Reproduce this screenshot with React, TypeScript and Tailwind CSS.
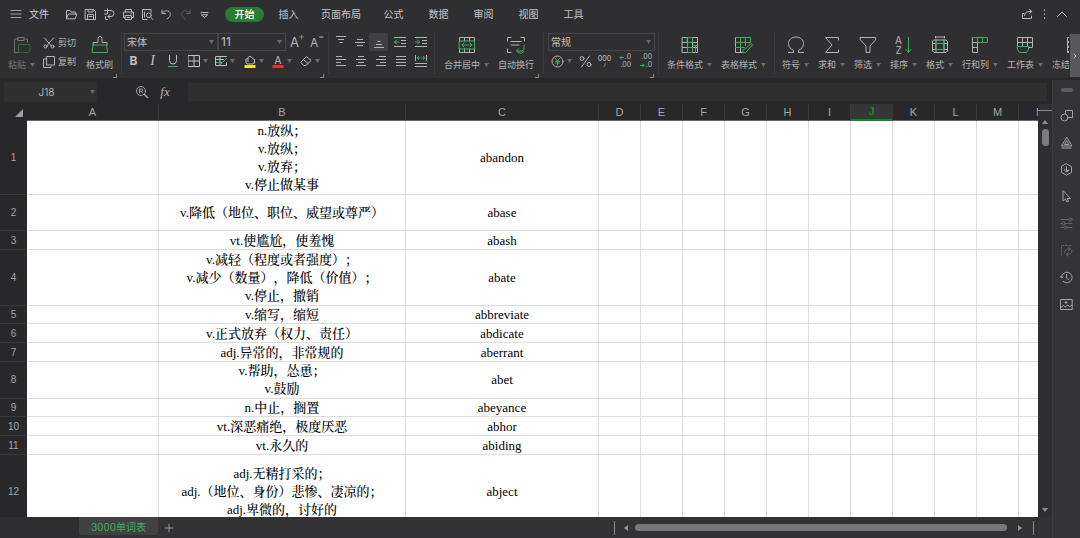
import React from "react";

type Kids = { children?: React.ReactNode };

const GREEN = "#3fae5c";

function Svg({ w = 16, h = 16, children }: Kids & { w?: number; h?: number }) {
  return (
    <svg
      width={w}
      height={h}
      viewBox={`0 0 ${w} ${h}`}
      fill="none"
      stroke="currentColor"
      strokeWidth="1"
      strokeLinecap="round"
      strokeLinejoin="round"
      className="shrink-0"
      aria-hidden="true"
    >
      {children}
    </svg>
  );
}

function Caret() {
  return (
    <svg width="5" height="4" viewBox="0 0 5 4" fill="currentColor" className="shrink-0 text-[#6c6c6f]" aria-hidden="true">
      <path d="M0 0h5L2.5 4z" />
    </svg>
  );
}

function Divider() {
  return <span className="my-1 w-px shrink-0 self-stretch bg-[#3b3b3e]" />;
}

function Corner() {
  return (
    <span className="absolute right-1 bottom-0 h-1 w-1 border-r border-b border-[#88888a]" />
  );
}

function Tool({ icon, label, caret = true, dim = false }: { icon: React.ReactNode; label: string; caret?: boolean; dim?: boolean }) {
  return (
    <button
      type="button"
      className={`flex shrink-0 flex-col items-center gap-1 text-[9px] leading-3 whitespace-nowrap ${dim ? "text-[#737376]" : "text-[#b4b4b6]"}`}
    >
      <span className="flex h-5 items-center">{icon}</span>
      <span className="flex items-center gap-1">
        {label}
        {caret && <Caret />}
      </span>
    </button>
  );
}

function Small({ label, w, caret = false, active = false, children }: Kids & { label: string; w: string; caret?: boolean; active?: boolean }) {
  return (
    <button
      type="button"
      aria-label={label}
      className={`flex h-[18px] shrink-0 items-center justify-center gap-[3px] ${w} ${active ? "rounded-xs bg-[#404042]" : ""}`}
    >
      {children}
      {caret && <Caret />}
    </button>
  );
}

function Lines({ d, extra }: { d: string; extra?: string }) {
  return (
    <Svg w={12} h={12}>
      <path d={d} strokeLinecap="butt" />
      {extra && <path d={extra} stroke={GREEN} />}
    </Svg>
  );
}

const quick: [string, React.ReactNode][] = [
  ["打开", <path d="M1.5 10.5v-8h3.5l1 1.5h4.5v2M1.5 10.5l2-4.5h8.5l-1.8 4.5z" />],
  ["保存", <><path d="M1.5 1.5h8l2 2v8h-10z" /><path d="M4 1.5v2.5h5V1.5M3.5 11.5v-5h6v5M5 8.5h3" /></>],
  ["输出", <><path d="M1.5 2.5h6.500a3 3 0 0 1 0 6H5M7 6.500l-2.200 2 2.200 2M4.500 1v5H1.500M2.500 8.500v3h2" /></>],
  ["打印", <><path d="M3.5 4V1.5h6V4M3 9.5H1.5V4h10v5.5H10M3.5 7.5h6v4h-6zM9 5.8h.5M5 9.5h3" /></>],
  ["打印预览", <><path d="M6 11.5H1.5v-10h8.5v3" /><circle cx="7.8" cy="7.3" r="2.4" /><path d="M9.6 9.2l2.2 2.3M3.5 4v5" /></>],
  ["撤销", <path d="M2 2v3.5h3.5M2.2 5.2C4 2.8 7 2 9 3.6c2.4 2 1.5 5.4-2 7.4" />],
];

const menus: [string, string][] = [
  ["插入", "w-[41px]"],
  ["页面布局", "w-14"],
  ["公式", "w-[41px]"],
  ["数据", "w-[41px]"],
  ["审阅", "w-[41px]"],
  ["视图", "w-[41px]"],
  ["工具", "w-[41px]"],
];

function TopBar() {
  return (
    <header className="flex h-7 shrink-0 items-center pr-3 pl-2.5 text-[10px] text-[#d2d2d4]">
      <button type="button" aria-label="菜单" className="text-[#a0a0a3]">
        <Svg w={12} h={12}><path d="M1 2.5h10M1 6h10M1 9.5h10" /></Svg>
      </button>
      <button type="button" className="ml-[7px] w-8 text-left">文件</button>
      <div className="ml-1 flex gap-[6px] text-[#b8b8ba]">
        {quick.map(([name, d]) => (
          <button key={name} type="button" aria-label={name}>
            <Svg w={13} h={13}>{d}</Svg>
          </button>
        ))}
        <button type="button" aria-label="恢复" className="text-[#5f5f62]">
          <Svg w={13} h={13}><path d="M11 2v3.5H7.500M10.800 5.200C9 2.800 6 2 4 3.600c-2.400 2-1.500 5.400 2 7.400" /></Svg>
        </button>
        <button type="button" aria-label="自定义">
          <Svg w={13} h={13}><path d="M3 4.500h7M3.500 7L6.500 9.500 9.500 7z" /></Svg>
        </button>
      </div>
      <nav className="ml-3.5 flex items-center gap-1">
        <button type="button" className="h-[15px] w-[39px] rounded-full bg-[#267c33] leading-[15px] font-medium text-white">开始</button>
        {menus.map(([m, w]) => (
          <button key={m} type="button" className={`${w} text-center text-[#c4c4c6]`}>{m}</button>
        ))}
      </nav>
      <div className="ml-auto flex items-center gap-1.5 text-[#b8b8ba]">
        <button type="button" aria-label="分享">
          <Svg w={12} h={12}><path d="M3 5.500H1.500v5h9V8M3.500 7.500C4 5 5.500 3.500 8 3.500h2.500M8.500 1.200l2.300 2.300L8.500 5.500" /></Svg>
        </button>
        <button type="button" aria-label="更多">
          <Svg w={11} h={12}><path d="M5.500 2v.3M5.500 6v.3M5.500 10v.3" strokeWidth="1.300" /></Svg>
        </button>
        <button type="button" aria-label="收起">
          <Svg w={12} h={12}><path d="M1.500 8.500L6 4l4.500 4.500" /></Svg>
        </button>
      </div>
    </header>
  );
}

function Select({ label, value, w, size = "text-[10px]" }: { label: string; value: string; w: string; size?: string }) {
  return (
    <label className={`relative flex h-[18px] items-center border border-[#454548] ${w}`}>
      <select aria-label={label} defaultValue={value} className={`w-full appearance-none bg-transparent pl-[2px] leading-4 text-[#c0c0c2] outline-none ${size}`}>
        <option>{value}</option>
      </select>
      <span className="pointer-events-none absolute right-[3px]"><Caret /></span>
    </label>
  );
}

const ribbonEnd: [string, React.ReactNode][] = [
  ["符号", <Svg w={18} h={18}><path d="M1.500 16.500h5v-2.300C3.500 13 1.500 11 1.500 7.700 1.500 4 4.500 1 9 1s7.500 3 7.500 6.700c0 3.300-2 5.300-5 6.500v2.300h5" /></Svg>],
  ["求和", <Svg w={18} h={18}><path d="M15.500 4V1.500h-13L9 9l-6.500 7.500h13V14" /></Svg>],
  ["筛选", <Svg w={18} h={18}><path d="M1.500 1.500h15V4L11 10v6.500H7V10L1.500 4z" /></Svg>],
  ["排序", <span className="flex items-center gap-[3px]">
    <span className="flex flex-col items-center text-[10px] leading-[10px]"><span>A</span><span>Z</span></span>
    <Svg w={7} h={18}><path d="M3.500 1.500v15M1 13.500l2.500 3 2.500-3" stroke={GREEN} /></Svg>
  </span>],
  ["格式", <Svg w={18} h={18}>
    <path d="M4.500 0v2M13.500 0v2M4.500 1h9M3 4h12l1.500 1.500v9.500L15 16.500H3L1.500 15V5.500zM1.500 7.500h15M1.500 13.500h15M5 4v12.500M13 4v12.500" />
    <path d="M5 7.500h8v6H5z" stroke={GREEN} />
  </Svg>],
  ["行和列", <Svg w={18} h={18}>
    <path d="M1.500 6.500v10h5v-10M1.500 11.500h5M1.500 1.500v5h5" />
    <path d="M1.500 1.500h15v5h-10v-5M11.500 1.500v5" stroke={GREEN} />
  </Svg>],
  ["工作表", <Svg w={18} h={18}>
    <path d="M1.500 10V1.500h15v10h-4M1.500 6.500h15M6.500 1.500V10M11.500 1.500v8.500" />
    <path d="M1.500 10.500h11v3l-2 3h-7l-2-3z" stroke={GREEN} />
  </Svg>],
];

function Ribbon() {
  return (
    <section aria-label="开始" className="flex h-[52px] shrink-0 border-b-2 border-[#262628] text-[#b4b4b6]">
      <div className="flex min-w-0 flex-1 overflow-hidden">
        <div className="relative flex w-[121px] shrink-0 items-start pt-[7px] pl-2">
          <Tool dim label="粘贴" icon={
            <Svg w={18} h={18}>
              <path d="M5 3H1.500v13.500h4M11 3h3.500v3.500M5 1.500h6v3H5z" />
              <path d="M6 8.500h11v6l-2 2H6z" stroke="#2b6b3d" />
            </Svg>} />
          <div className="ml-2 flex flex-col gap-[3px] text-[9px] leading-4">
            <button type="button" className="flex items-center gap-[3px]">
              <Svg w={12} h={12}><path d="M1.500 1l7 8M10.500 1l-7 8" /><circle cx="2.500" cy="9.500" r="1.500" /><circle cx="9.500" cy="9.500" r="1.500" /></Svg>
              剪切
            </button>
            <button type="button" className="flex items-center gap-[3px]">
              <Svg w={12} h={12}><path d="M4 .5h7.500v8.500H4zM2.500 3H.5v8.500H8V10.500" /></Svg>
              复制
            </button>
          </div>
          <div className="ml-[10px]">
            <Tool caret={false} label="格式刷" icon={
              <Svg w={18} h={18}>
                <path d="M2 9V6.500h5V2.500a2 2 0 0 1 4 0v4h5V9" />
                <path d="M2.500 9h13l1 7.500h-15z" stroke={GREEN} />
              </Svg>} />
          </div>
          <Corner />
        </div>
        <Divider />
        <div className="relative flex w-[206px] shrink-0 flex-col gap-px pt-[5px] pl-0.5">
          <div className="flex items-center">
            <Select label="字体" value="宋体" w="w-[94px]" />
            <Select label="字号" value="11" w="w-[68px]" size="text-xs" />
            <Small label="增大字号" w="w-[22px]">
              <Svg w={14} h={14}><text x="0" y="12" fontSize="13" fill="currentColor" stroke="none" fontFamily="Inter">A</text><path d="M11.500 0v4M9.500 2h4" stroke={GREEN} /></Svg>
            </Small>
            <Small label="减小字号" w="w-[18px]">
              <Svg w={14} h={14}><text x="0" y="12" fontSize="12" fill="currentColor" stroke="none" fontFamily="Inter">A</text><path d="M9.500 2h3.500" /></Svg>
            </Small>
          </div>
          <div className="flex items-center text-xs text-[#c0c0c2]">
            <Small label="加粗" w="w-[19px]"><span className="font-bold">B</span></Small>
            <Small label="倾斜" w="w-[19px]"><span className="font-['Liberation_Serif',serif] text-sm italic">I</span></Small>
            <Small label="下划线" w="w-[22px]"><Svg w={12} h={14}><path d="M2.500 1.500v5a3.500 3.500 0 0 0 7 0v-5" /><path d="M1.500 12.500h9" stroke={GREEN} /></Svg></Small>
            <Small label="边框" w="w-[27px]" caret><Svg w={12} h={12}><path d="M.5.5h11v11H.5zM6 .5v11M.5 6h11" /></Svg></Small>
            <Small label="绘制表格" w="w-[27px]" caret><Svg w={12} h={12}><path d="M11.500 1.500H.5v9h11V8M.5 4.500h8M5 1.500v9M.5 7.500h4" /><path d="M6 9l5.500-5.500M2 7.500h5" stroke={GREEN} /></Svg></Small>
            <Small label="填充颜色" w="w-[32px]" caret><Svg w={12} h={13}><path d="M2 4.500L6 1l4 3.500M2 4.500v3l1 1.500h6l1.500-2M10.500 4.500V8M4 3.500v3" /><path d="M.5 11.500h11" stroke="#f3ea1c" strokeWidth="3" strokeLinecap="butt" /></Svg></Small>
            <Small label="字体颜色" w="w-[24px]" caret><Svg w={12} h={13}><text x="2.500" y="9" fontSize="10" fill="currentColor" stroke="none" fontFamily="Inter">A</text><path d="M1.500 11.500h9" stroke="#e8302c" strokeWidth="3" /></Svg></Small>
            <Small label="清除" w="w-[32px]" caret><Svg w={12} h={12}><path d="M1 7l5.500-5.500L11 5.500 6 10.500H4zM3.500 4.500L8 8.500" /></Svg></Small>
          </div>
          <Corner />
        </div>
        <Divider />
        <div className="flex w-[105px] shrink-0 flex-col gap-px pt-[5px] pl-0.5">
          <div className="flex items-center">
            <Small label="顶端对齐" w="w-[19px]"><Lines d="M1 .5h10M3 3.500h6M4.500 6.500h3" /></Small>
            <Small label="垂直居中" w="w-[19px]"><Lines d="M3 3.500h6M1 6.500h10M3 9.500h6" /></Small>
            <Small label="底端对齐" w="w-[19px]" active><Lines d="M4.500 5.500h3M3 8.500h6M1 11.500h10" /></Small>
            <Small label="减少缩进" w="w-[24px]"><Lines d="M0 1.500h12M7 4.500h5M7 7.500h5M0 10.500h12" extra="M5 6H.5M2.500 4l-2 2 2 2" /></Small>
            <Small label="增加缩进" w="w-[18px]"><Lines d="M0 1.500h12M7 4.500h5M7 7.500h5M0 10.500h12" extra="M0 6h4.500M2.500 4l2 2-2 2" /></Small>
          </div>
          <div className="flex items-center">
            <Small label="左对齐" w="w-[20px]"><Lines d="M1 1.500h6M1 4.500h10M1 7.500h5M1 10.500h10" /></Small>
            <Small label="居中" w="w-[20px]"><Lines d="M3 1.500h6M1 4.500h10M3 7.500h6M1 10.500h10" /></Small>
            <Small label="右对齐" w="w-[20px]"><Lines d="M4 1.500h7M1 4.500h10M5 7.500h6M1 10.500h10" /></Small>
            <Small label="两端对齐" w="w-[20px]"><Lines d="M1 1.500h10M1 4.500h10M1 7.500h10M1 10.500h10" /></Small>
            <Small label="分散对齐" w="w-[20px]"><Lines d="M0 8.500h12M0 11.500h12M.5 0v6M11.500 0v6" extra="M5 3H2.500l1-1.500M2.500 3l1 1.500M7 3h2.500L8.500 1.500M9.500 3l-1 1.500" /></Small>
          </div>
        </div>
        <Divider />
        <div className="relative flex w-[108px] shrink-0 gap-[9px] pt-[7px] pl-[9px]">
          <Tool label="合并居中" icon={
            <Svg w={18} h={18}>
              <path d="M1.500 5V1.500h15V5M1.500 13v3.500h15V13M6.500 1.500V5M11.500 1.500V5M6.500 13v3.500M11.500 13v3.500" />
              <path d="M1.500 5h15v8h-15zM4 9h10M6 7L4 9l2 2M12 7l2 2-2 2" stroke={GREEN} />
            </Svg>} />
          <Tool caret={false} label="自动换行" icon={
            <Svg w={20} h={18}>
              <path d="M1.500 5V1.500H5M15 1.500h3.500V5M1.500 13v3.500H5M5 5.500h10M5 9h8" />
              <path d="M18 9v4.500l-2 1.500h-5M13 12.500l-2.500 2.300 2.500 2.200h3l2-1.500" stroke={GREEN} />
            </Svg>} />
          <Corner />
        </div>
        <Divider />
        <div className="relative flex w-[114px] shrink-0 flex-col gap-px pt-[5px] pl-1">
          <Select label="数字格式" value="常规" w="w-[107px]" />
          <div className="flex items-center">
            <Small label="货币" w="w-[26px]" caret><Svg w={13} h={13}><circle cx="6.500" cy="6.500" r="5.500" /><path d="M4.500 3.500l2 2.500 2-2.500M6.500 6v4M4.500 6.500h4M4.500 8h4" stroke={GREEN} /></Svg></Small>
            <Small label="百分比" w="w-[22px]"><Svg w={13} h={13}><circle cx="3" cy="3.500" r="2" /><circle cx="10" cy="9.500" r="2" /><path d="M10.500 1L2.500 12" /></Svg></Small>
            <Small label="千位分隔" w="w-[17px]">
              <span className="flex flex-col items-center text-[7px] leading-[8px] font-medium">000<Svg w={3} h={5}><path d="M2 .5v1.500L1 3.500" stroke={GREEN} /></Svg></span>
            </Small>
            <Small label="增加小数位" w="w-[24px]">
              <span className="flex flex-col items-end text-[7px] leading-[8px]"><span className="flex items-center gap-px"><Svg w={5} h={5}><path d="M5 2.500H1M2.500 1L1 2.500 2.500 4" stroke={GREEN} /></Svg>.0</span><span>.00</span></span>
            </Small>
            <Small label="减少小数位" w="w-[18px]">
              <span className="flex flex-col items-end text-[7px] leading-[8px]"><span>.00</span><span className="flex items-center gap-px"><Svg w={5} h={5}><path d="M0 2.500h4M2.500 1L4 2.500 2.500 4" stroke={GREEN} /></Svg>.0</span></span>
            </Small>
          </div>
          <Corner />
        </div>
        <Divider />
        <div className="flex w-[115px] shrink-0 gap-[9px] pt-[7px] pl-2">
          <Tool label="条件格式" icon={
            <Svg w={18} h={18}>
              <path d="M1.500 1.500h15v15h-15zM1.500 6.500h15M1.500 11.500h15M6.500 1.500v15M11.500 1.500v15" />
              <path d="M6.500 1.500h5v5h-5zM6.500 6.500v5h5v5h-5v-5M11.500 9.500h5M14.500 9.500v7" stroke={GREEN} />
            </Svg>} />
          <Tool label="表格样式" icon={
            <Svg w={20} h={18}>
              <path d="M9 16.500H1.500v-15h15V6M6.500 11.500v5" />
              <path d="M1.500 1.500h15v4M1.500 6.500h15M1.500 11.500h9M6.500 1.500v10M11.500 1.500v8M9 16.500c-.500-3 1-4 2.500-3.500l5.500-5.500 1.500 1.500-5.500 6c-.500 1.500-2 2-4 1.500z" stroke={GREEN} />
            </Svg>} />
        </div>
        <Divider />
        <div className="flex shrink-0 gap-[9px] pt-[7px] pl-[7px]">
          {ribbonEnd.map(([label, icon]) => (
            <Tool key={label} label={label} icon={icon} />
          ))}
          <Tool label="冻结窗格" icon={
            <Svg w={18} h={18}><path d="M16.500 1.500h-15v15h15M6.500 1.500v15M1.500 6.500h15M1.500 11.500h15M1.500 6.500l5-5M1.500 11.500l5-5M1.500 16.500l5-5" /></Svg>} />
        </div>
      </div>
      <button type="button" aria-label="向右滚动" className="mt-[6px] ml-px flex h-[43px] w-[10px] shrink-0 items-center justify-center bg-[#59595b]">
        <Svg w={4} h={6}><path d="M1 1l2 2-2 2" /></Svg>
      </button>
    </section>
  );
}

function FormulaBar() {
  return (
    <div className="flex h-6 shrink-0 items-center bg-[#28282a] pr-[5px] pl-1">
      <label className="relative flex h-5 w-[93px] items-center bg-[#2f2f2f]">
        <input aria-label="名称框" defaultValue="J18" className="w-full bg-transparent pr-2 text-center text-[10px] text-[#b4b4b6] outline-none" />
        <span className="absolute right-[2px]"><Caret /></span>
      </label>
      <button type="button" aria-label="查找" className="ml-[38px] text-[#a0a0a3]">
        <Svg w={14} h={14}><circle cx="6" cy="6" r="4.500" /><path d="M4.500 8V4h2a1 1 0 0 1 0 2.200h-2M6.500 6.200L7.500 8" /><path d="M9.500 9.500l3 3" strokeWidth="1.500" /></Svg>
      </button>
      <button type="button" aria-label="插入函数" className="ml-2 w-4 font-['Liberation_Serif',serif] text-[13px] leading-5 text-[#b4b4b6] italic">fx</button>
      <input aria-label="编辑栏" className="ml-[15px] h-[18px] min-w-0 flex-1 bg-[#2f2f2f] text-[10px] text-[#c0c0c2] outline-none" />
    </div>
  );
}

const letters = ["A", "B", "C", "D", "E", "F", "G", "H", "I", "J", "K", "L", "M", "N"];

const rows: { h: string; lines: string[]; word: string }[] = [
  { h: "h-[74px] leading-[18px]", lines: ["n.放纵；", "v.放纵；", "v.放弃；", "v.停止做某事"], word: "abandon" },
  { h: "h-9 leading-[18px]", lines: ["v.降低（地位、职位、威望或尊严）"], word: "abase" },
  { h: "h-[19px] leading-[17px]", lines: ["vt.使尴尬，使羞愧"], word: "abash" },
  { h: "h-14 leading-[18px]", lines: ["v.减轻（程度或者强度）；", "v.减少（数量），降低（价值）；", "v.停止，撤销"], word: "abate" },
  { h: "h-[18px] leading-[17px]", lines: ["v.缩写，缩短"], word: "abbreviate" },
  { h: "h-[19px] leading-[17px]", lines: ["v.正式放弃（权力、责任）"], word: "abdicate" },
  { h: "h-[19px] leading-[17px]", lines: ["adj.异常的，非常规的"], word: "aberrant" },
  { h: "h-[37px] leading-[18px]", lines: ["v.帮助，怂恿；", "v.鼓励"], word: "abet" },
  { h: "h-[18px] leading-[17px]", lines: ["n.中止，搁置"], word: "abeyance" },
  { h: "h-[19px] leading-[17px]", lines: ["vt.深恶痛绝，极度厌恶"], word: "abhor" },
  { h: "h-[19px] leading-[17px]", lines: ["vt.永久的"], word: "abiding" },
  { h: "h-[74px] leading-[18px]", lines: ["adj.无精打采的；", "adj.（地位、身份）悲惨、凄凉的；", "adj.卑微的，讨好的"], word: "abject" },
];

function Sheet() {
  return (
    <div className="min-w-0 flex-1 overflow-hidden bg-white">
      <table className="w-full min-w-[1062px] table-fixed border-separate border-spacing-0 text-center">
        <colgroup>
          <col className="w-[27px]" />
          <col className="w-[132px]" />
          <col className="w-[247px]" />
          <col className="w-[193px]" />
          {letters.slice(3, 13).map((l) => <col key={l} className="w-[42px]" />)}
          <col />
        </colgroup>
        <thead className="font-['Liberation_Sans',sans-serif] text-[11px] leading-4 text-[#a6a6a8]">
          <tr>
            <th aria-label="全选" className="h-[17px] bg-[#28282a] p-0">
              <svg width="8" height="8" viewBox="0 0 8 8" className="mr-1 ml-auto" aria-hidden="true"><path d="M8 0v8H0z" fill="#a0a0a2" /></svg>
            </th>
            {letters.map((l) => (
              <th
                key={l}
                scope="col"
                className={`h-[17px] p-0 ${l === "J" ? "border-r border-b-2 border-r-[#3a3a3c] border-b-[#14842f] bg-[#363638] leading-[15px] font-bold text-[#158a32]" : "border-r border-b border-r-[#3a3a3c] border-b-[#68686a] bg-[#28282a] font-normal"}`}
              >
                {l}
              </th>
            ))}
          </tr>
        </thead>
        <tbody className="font-['Liberation_Serif','Noto_Serif_CJK_SC','Noto_Sans_CJK_SC',serif] text-black">
          {rows.map((r, i) => (
            <tr key={r.word} className={r.h}>
              <th scope="row" className="border-b border-[#3a3a3c] bg-[#28282a] p-0 font-['Liberation_Sans',sans-serif] text-[10px] font-normal text-[#a6a6a8]">{i + 1}</th>
              {letters.map((l) => (
                <td
                  key={l}
                  className="border-r border-b border-[#dcdedc] p-0 text-[13px] font-medium whitespace-nowrap [text-spacing-trim:space-all]"
                >
                  {l === "B" && r.lines.map((t) => <div key={t}>{t}</div>)}
                  {l === "C" && r.word}
                </td>
              ))}
            </tr>
          ))}
        </tbody>
      </table>
    </div>
  );
}

function Arrow({ d }: { d: string }) {
  return (
    <svg width="6" height="6" viewBox="0 0 6 6" fill="#929294" className="shrink-0" aria-hidden="true">
      <path d={d} />
    </svg>
  );
}

function BottomBar() {
  return (
    <footer className="flex h-[21px] shrink-0 items-center bg-[#323234]">
      <div className="h-full w-[79px] bg-[#2e2e30]" />
      <button type="button" className="h-[18px] w-[79px] self-start rounded-b-xs bg-[#414143] text-[10px] leading-[20px] text-[#3fae5c]">3000单词表</button>
      <button type="button" aria-label="新建工作表" className="ml-1.5 text-[#98989a]">
        <Svg w={10} h={10}><path d="M5 1v8M1 5h8" /></Svg>
      </button>
      <div className="ml-auto flex w-5/12 min-w-0 items-center">
        <span className="h-3.5 w-px bg-[#8c8c8e]" />
        <span className="ml-2"><Arrow d="M5 0v6L1 3z" /></span>
        <span className="ml-1.5 h-[7px] min-w-0 flex-1 rounded-full bg-[#77777a]" />
        <span className="mr-2.5 ml-2.5"><Arrow d="M1 0v6l4-3z" /></span>
        <span className="mr-[18px] h-3.5 w-px bg-[#8c8c8e]" />
      </div>
    </footer>
  );
}

const side: [string, string, React.ReactNode][] = [
  ["形状", "text-[#a6a6a8]", <><circle cx="4.500" cy="8.500" r="3.500" /><path d="M5.500 4.500V1.500h7v7H8.500" /></>],
  ["样式", "text-[#a6a6a8]", <><path d="M6.500 1.500L1.500 10h10zM6.500 5L4.500 8.500h4zM2 12h9" /></>],
  ["属性", "text-[#a6a6a8]", <><path d="M6.500.8l5 2.900v5.600l-5 2.900-5-2.900V3.700z" /><path d="M6.500 4v4.500M4.500 6.500c0 3 4 3 4 .5L6.500 8" /></>],
  ["选择", "text-[#a6a6a8]", <path d="M3 1v10l2.500-2 1.500 3 1.500-.8L7.200 8.500h3z" />],
  ["设置", "text-[#66666a]", <><path d="M1 2.500h7.500M1 6.500h1M5 6.500h7M1 10.500h3M7 10.500h5" /><circle cx="10.500" cy="2.500" r="1.500" /><circle cx="3.500" cy="6.500" r="1.500" /><circle cx="5.500" cy="10.500" r="1.500" /></>],
  ["转换", "text-[#66666a]", <><path d="M1.500 11.500v-10h10" strokeDasharray="2 1.500" /><path d="M4.500 9c0-3 2-4 5-4M8.500 3.500l2 1.500-2 1.500M12 6.500c0 3-2 4-5 4M8 9l-2 1.500L8 12" /></>],
  ["历史", "text-[#a6a6a8]", <><path d="M1.500 6.500a5.300 5.300 0 1 1 1.800 4M.5 5.500l1 1.500 1.500-1M6.500 3.500v3.500l2 1.500" /></>],
  ["图片", "text-[#a6a6a8]", <><path d="M.8 1.500h11.400v10H.8zM1 9.500l2.500-2 2 1.500 2-2 2 1.500 2.500-1M6 3.500v2M5 4.500h2" /></>],
];

function SideBar() {
  return (
    <aside className="flex w-7 shrink-0 flex-col items-center border-l border-[#3c3c3f] bg-[#343436] pt-2">
      <span className="h-1 w-3 rounded-xs bg-[#5c5c5f]" />
      <div className="mt-[17px] flex flex-col gap-3.5">
        {side.map(([name, color, d]) => (
          <button key={name} type="button" aria-label={name} className={color}>
            <Svg w={13} h={13}>{d}</Svg>
          </button>
        ))}
      </div>
    </aside>
  );
}

export default function App() {
  return (
    <div className="flex h-screen flex-col overflow-hidden bg-[#2f2f31] font-['Inter','Noto_Sans_CJK_SC',sans-serif]">
      <TopBar />
      <Ribbon />
      <div className="flex min-h-0 flex-1">
        <main className="flex min-w-0 flex-1 flex-col">
          <FormulaBar />
          <div className="flex min-h-0 flex-1">
            <Sheet />
            <div className="flex w-3.5 shrink-0 flex-col items-center bg-[#2f2f31]">
              <span className="mt-1.5 h-px w-full bg-[#8c8c8e]" />
              <span className="mt-2"><Arrow d="M0 5h6L3 1z" /></span>
              <span className="mt-1 h-[17px] w-[7px] rounded-full bg-[#7c7c7f]" />
              <span className="mt-auto mb-1"><Arrow d="M0 1h6L3 5z" /></span>
            </div>
          </div>
          <BottomBar />
        </main>
        <SideBar />
      </div>
    </div>
  );
}
